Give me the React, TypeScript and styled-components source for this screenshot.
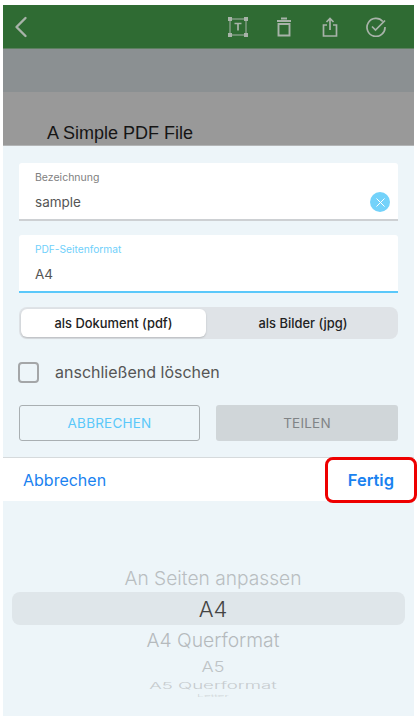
import React from "react";
import styled, { createGlobalStyle } from "styled-components";
import { ChevronLeft, X } from "lucide-react";

const GlobalStyle = createGlobalStyle`
  html, body {
    margin: 0;
    padding: 0;
    background: #fff;
    font-family: Inter, "Liberation Sans", sans-serif;
  }
`;

const Page = styled.div`
  width: 420px;
  height: 722px;
  padding: 5px 6px 6px 3px;
  box-sizing: border-box;
  position: relative;
  overflow: hidden;
`;

const Screen = styled.div`
  display: flex;
  flex-direction: column;
  height: 100%;
  background: #edf5f9;
`;

const TopBar = styled.div`
  height: 44px;
  flex: none;
  box-sizing: border-box;
  display: flex;
  align-items: center;
  padding: 0 28px 0 0;
  background: #2f6b33;
  border-bottom: 1px solid #5d7f60;
  color: #a8b3a9;
`;

const BarActions = styled.div`
  margin-left: auto;
  display: flex;
  align-items: center;
  gap: 26px;
`;

const BarIcon = styled.svg`
  width: 20px;
  height: 20px;
  display: block;
  fill: none;
  stroke: currentColor;
  stroke-width: 1.9;
`;

const GrayBand = styled.div`
  height: 43px;
  flex: none;
  background: #8b9092;
`;

const DocPreview = styled.div`
  height: 54px;
  flex: none;
  box-sizing: border-box;
  background: #999999;
  border-bottom: 1px solid #b3b5b6;
  padding: 30px 0 0 44px;
  font-family: "Liberation Sans", Arial, sans-serif;
  font-size: 18px;
  line-height: 22px;
  color: #151515;
`;

const Form = styled.div`
  height: 311px;
  flex: none;
  box-sizing: border-box;
  padding: 17px 16px 0;
`;

const Field = styled.div<{ $active?: boolean }>`
  position: relative;
  height: 58px;
  box-sizing: border-box;
  background: #fff;
  border-radius: 3px 3px 0 0;
  padding: 8px 16px 0;
  margin-bottom: 14px;
  border-bottom: 2px solid ${({ $active }) => ($active ? "#5ac8fa" : "#cdd0d3")};
`;

const FieldLabel = styled.div<{ $active?: boolean }>`
  font-size: ${({ $active }) => ($active ? "10.2px" : "10.5px")};
  line-height: 13px;
  color: ${({ $active }) => ($active ? "#6fd0fb" : "#808080")};
`;

const FieldValue = styled.div`
  margin-top: 8px;
  font-size: 13.5px;
  line-height: 20px;
  color: #555;
`;

const ClearButton = styled.div`
  position: absolute;
  right: 8px;
  top: 29px;
  width: 20px;
  height: 20px;
  border-radius: 50%;
  background: #73d2fa;
  color: #fff;
  display: flex;
  align-items: center;
  justify-content: center;
`;

const Segmented = styled.div`
  height: 32px;
  box-sizing: border-box;
  padding: 2px;
  background: #dfe3e7;
  border-radius: 8px;
  display: flex;
  margin-top: 1px;
`;

const Segment = styled.div<{ $selected?: boolean }>`
  flex: none;
  box-sizing: border-box;
  width: ${({ $selected }) => ($selected ? "185px" : "190px")};
  padding-left: ${({ $selected }) => ($selected ? "0" : "4px")};
  display: flex;
  align-items: center;
  justify-content: center;
  font-size: 12.9px;
  font-weight: 500;
  color: #222;
  border-radius: 6px;
  background: ${({ $selected }) => ($selected ? "#fff" : "transparent")};
  box-shadow: ${({ $selected }) =>
    $selected ? "0 1px 2px rgba(0,0,0,0.18)" : "none"};
`;

const CheckRow = styled.div`
  display: flex;
  align-items: center;
  gap: 16px;
  margin: 22px 0 0 -1px;
  height: 22px;
`;

const Checkbox = styled.div`
  width: 21px;
  height: 21px;
  box-sizing: border-box;
  border: 2px solid #a4a6a8;
  border-radius: 4px;
`;

const CheckLabel = styled.span`
  font-size: 16px;
  color: #555;
`;

const Actions = styled.div`
  display: flex;
  justify-content: space-between;
  margin-top: 22px;
`;

const ActionButton = styled.div<{ $filled?: boolean }>`
  flex: none;
  width: ${({ $filled }) => ($filled ? "182px" : "181px")};
  height: 36px;
  box-sizing: border-box;
  display: flex;
  align-items: center;
  justify-content: center;
  border-radius: 3px;
  font-size: 13.5px;
  font-weight: 400;
  letter-spacing: 0.2px;
  color: ${({ $filled }) => ($filled ? "#808486" : "#5ac8fa")};
  background: ${({ $filled }) => ($filled ? "#d0d6d9" : "transparent")};
  border: ${({ $filled }) => ($filled ? "none" : "1px solid #a9afb2")};
`;

const PickerBar = styled.div`
  height: 44px;
  flex: none;
  box-sizing: border-box;
  background: #fff;
  border-top: 1px solid #d6dadc;
  display: flex;
  align-items: center;
  justify-content: space-between;
  padding: 0 20px;
  color: #1a82f0;
  font-size: 16px;
`;

const DoneLabel = styled.span`
  font-weight: 600;
  font-size: 16.5px;
`;

const Highlight = styled.div`
  position: absolute;
  left: 325px;
  top: 457px;
  width: 92px;
  height: 46px;
  box-sizing: border-box;
  border: 3px solid #ee0000;
  border-radius: 8px;
`;

const Picker = styled.div`
  flex: 1;
  display: flex;
  flex-direction: column;
  padding: 64px 9px 0;
  overflow: hidden;
`;

const PickerItem = styled.div<{
  $size: number;
  $height: number;
  $squash?: number;
  $color: string;
}>`
  height: ${({ $height }) => $height}px;
  flex: none;
  display: flex;
  align-items: center;
  justify-content: center;
  padding-left: 9px;
  font-size: ${({ $size }) => $size}px;
  font-weight: 300;
  color: ${({ $color }) => $color};
  transform: scaleY(${({ $squash }) => $squash ?? 1});
  white-space: nowrap;
`;

const PickerSelected = styled(PickerItem)`
  background: #dfe6ea;
  border-radius: 8px;
  margin: 1px 0 0;
`;

const TextIcon = () => (
  <BarIcon viewBox="0 0 20 20" style={{ strokeWidth: 1 }}>
    <rect x="2" y="2" width="16" height="16" />
    <path d="M6.5 6.5h7M10 6.500v7" strokeWidth={1.7} />
    <g fill="currentColor">
      <rect x="0.5" y="0.5" width="3" height="3" />
      <rect x="16.5" y="0.5" width="3" height="3" />
      <rect x="0.5" y="16.5" width="3" height="3" />
      <rect x="16.5" y="16.5" width="3" height="3" />
    </g>
  </BarIcon>
);

const TrashIcon = () => (
  <BarIcon viewBox="0 0 20 20">
    <path d="M3 4h14M7 1.500h6" />
    <path d="M4.500 7h11v11.500h-11z" />
  </BarIcon>
);

const ShareIcon = () => (
  <BarIcon viewBox="0 0 20 20" style={{ strokeWidth: 1.7 }}>
    <path d="M10 13V1.500M6.500 5L10 1.500 13.500 5" />
    <path d="M7 8H3.500v11h13V8H13" />
  </BarIcon>
);

const CheckCircleIcon = () => (
  <BarIcon viewBox="0 0 20 20" style={{ strokeWidth: 1.7 }}>
    <path d="M16.800 4.500A9 9 0 1 0 19 10" />
    <path d="M6 9.500l3.500 3.500L19 3.500" />
  </BarIcon>
);

export default function App() {
  return (
    <>
      <GlobalStyle />
      <Page>
        <Screen>
          <TopBar>
            <ChevronLeft size={36} strokeWidth={1.6} />
            <BarActions>
              <TextIcon />
              <TrashIcon />
              <ShareIcon />
              <CheckCircleIcon />
            </BarActions>
          </TopBar>
          <GrayBand />
          <DocPreview>A Simple PDF File</DocPreview>
          <Form>
            <Field>
              <FieldLabel>Bezeichnung</FieldLabel>
              <FieldValue>sample</FieldValue>
              <ClearButton>
                <X size={15} strokeWidth={1.6} />
              </ClearButton>
            </Field>
            <Field $active>
              <FieldLabel $active>PDF-Seitenformat</FieldLabel>
              <FieldValue>A4</FieldValue>
            </Field>
            <Segmented>
              <Segment $selected>als Dokument (pdf)</Segment>
              <Segment>als Bilder (jpg)</Segment>
            </Segmented>
            <CheckRow>
              <Checkbox />
              <CheckLabel>anschließend löschen</CheckLabel>
            </CheckRow>
            <Actions>
              <ActionButton>ABBRECHEN</ActionButton>
              <ActionButton $filled>TEILEN</ActionButton>
            </Actions>
          </Form>
          <PickerBar>
            <span>Abbrechen</span>
            <DoneLabel>Fertig</DoneLabel>
          </PickerBar>
          <Picker>
            <PickerItem $size={19.2} $height={26} $color="#b9bec1">
              An Seiten anpassen
            </PickerItem>
            <PickerSelected $size={22} $height={33} $color="#444">
              A4
            </PickerSelected>
            <PickerItem $size={19.3} $height={30} $color="#b5babd">
              A4 Querformat
            </PickerItem>
            <PickerItem $size={18} $height={22} $squash={0.8} $color="#bec3c6">
              A5
            </PickerItem>
            <PickerItem $size={18.6} $height={16} $squash={0.5} $color="#c6cbce">
              A5 Querformat
            </PickerItem>
            <PickerItem $size={12} $height={5} $squash={0.3} $color="#d0d5d8">
              Letter
            </PickerItem>
          </Picker>
        </Screen>
        <Highlight />
      </Page>
    </>
  );
}
